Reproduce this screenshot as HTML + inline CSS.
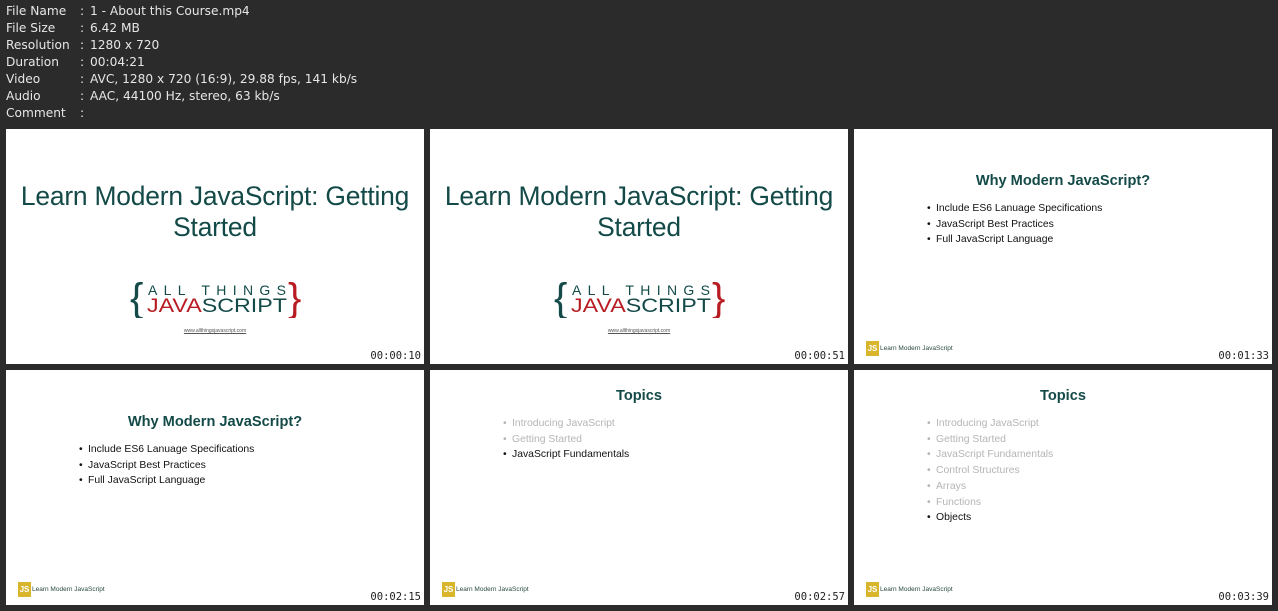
<!DOCTYPE html>
<html><head><meta charset="utf-8"><style>
body{margin:0;width:1278px;height:611px;background:#2b2b2b;overflow:hidden;font-family:"Liberation Sans",sans-serif;position:relative}
.info{position:absolute;left:6px;top:3px;color:#e6e6e6;font-family:"DejaVu Sans",sans-serif;font-size:12.2px;line-height:17px}
.info div span{display:inline-block;width:74px}
.info div i{font-style:normal;margin-right:2px}
.c{position:absolute;width:418px;height:235px;background:#fff;overflow:hidden}
.big{position:absolute;left:0;width:418px;top:52px;text-align:center;color:#134a48;font-size:26.4px;line-height:31px;letter-spacing:-0.2px}
.logo{position:absolute;left:124px;top:149px;width:172px;height:40px}
.url{position:absolute;left:0;width:418px;top:199px;text-align:center;font-size:5px;color:#555;text-decoration:underline}
.h{position:absolute;left:0;width:418px;text-align:center;color:#134a48;font-weight:bold;font-size:14.6px}
ul{position:absolute;margin:0;padding:0;list-style:none;font-size:10.4px;line-height:15.7px;color:#111}
li:before{content:"•";position:absolute;left:-9px}
li{position:relative}
.g{color:#b5b5b5}
.ft{position:absolute;left:12px;top:212px;height:16px;font-size:6.5px;color:#2a4a40;line-height:16px}
.ft b{display:inline-block;width:13px;height:15px;background:#d8b52b;vertical-align:top;margin-right:1px;color:#fff;font-size:8px;text-align:center;line-height:15px}
.ts{position:absolute;right:3px;bottom:2px;font-family:"DejaVu Sans Mono",monospace;font-size:10.5px;color:#222;text-shadow:1px 1px 0 #fff,-1px 0 0 #fff}
</style></head><body>
<div class="info">
<div><span>File Name</span><i>:</i> 1 - About this Course.mp4</div>
<div><span>File Size</span><i>:</i> 6.42 MB</div>
<div><span>Resolution</span><i>:</i> 1280 x 720</div>
<div><span>Duration</span><i>:</i> 00:04:21</div>
<div><span>Video</span><i>:</i> AVC, 1280 x 720 (16:9), 29.88 fps, 141 kb/s</div>
<div><span>Audio</span><i>:</i> AAC, 44100 Hz, stereo, 63 kb/s</div>
<div><span>Comment</span><i>:</i></div>
</div>

<div class="c" style="left:6px;top:129px">
<div class="big">Learn Modern JavaScript: Getting<br>Started</div>
<svg class="logo" viewBox="0 0 172 40"><text x="0" y="33" font-size="40" fill="#134a48" font-family="Liberation Sans">{</text><text x="18" y="17" font-size="14" fill="#134a48" textLength="138" lengthAdjust="spacing">ALL THINGS</text><text x="17" y="34" font-size="19" fill="#b81c22" textLength="140" lengthAdjust="spacingAndGlyphs">JAVA<tspan fill="#134a48">SCRIPT</tspan></text><text x="158" y="33" font-size="40" fill="#b81c22" font-family="Liberation Sans">}</text></svg>
<div class="url">www.allthingsjavascript.com</div>
<div class="ts">00:00:10</div></div>

<div class="c" style="left:430px;top:129px">
<div class="big">Learn Modern JavaScript: Getting<br>Started</div>
<svg class="logo" viewBox="0 0 172 40"><text x="0" y="33" font-size="40" fill="#134a48" font-family="Liberation Sans">{</text><text x="18" y="17" font-size="14" fill="#134a48" textLength="138" lengthAdjust="spacing">ALL THINGS</text><text x="17" y="34" font-size="19" fill="#b81c22" textLength="140" lengthAdjust="spacingAndGlyphs">JAVA<tspan fill="#134a48">SCRIPT</tspan></text><text x="158" y="33" font-size="40" fill="#b81c22" font-family="Liberation Sans">}</text></svg>
<div class="url">www.allthingsjavascript.com</div>
<div class="ts">00:00:51</div></div>

<div class="c" style="left:854px;top:129px">
<div class="h" style="top:44px">Why Modern JavaScript?</div>
<ul style="left:82px;top:72px"><li>Include ES6 Lanuage Specifications</li><li>JavaScript Best Practices</li><li>Full JavaScript Language</li></ul>
<div class="ft"><b>JS</b>Learn Modern JavaScript</div>
<div class="ts">00:01:33</div></div>

<div class="c" style="left:6px;top:370px">
<div class="h" style="top:44px">Why Modern JavaScript?</div>
<ul style="left:82px;top:72px"><li>Include ES6 Lanuage Specifications</li><li>JavaScript Best Practices</li><li>Full JavaScript Language</li></ul>
<div class="ft"><b>JS</b>Learn Modern JavaScript</div>
<div class="ts">00:02:15</div></div>

<div class="c" style="left:430px;top:370px">
<div class="h" style="top:18px">Topics</div>
<ul style="left:82px;top:46px"><li class="g">Introducing JavaScript</li><li class="g">Getting Started</li><li>JavaScript Fundamentals</li></ul>
<div class="ft"><b>JS</b>Learn Modern JavaScript</div>
<div class="ts">00:02:57</div></div>

<div class="c" style="left:854px;top:370px">
<div class="h" style="top:18px">Topics</div>
<ul style="left:82px;top:46px"><li class="g">Introducing JavaScript</li><li class="g">Getting Started</li><li class="g">JavaScript Fundamentals</li><li class="g">Control Structures</li><li class="g">Arrays</li><li class="g">Functions</li><li>Objects</li></ul>
<div class="ft"><b>JS</b>Learn Modern JavaScript</div>
<div class="ts">00:03:39</div></div>
</body></html>
